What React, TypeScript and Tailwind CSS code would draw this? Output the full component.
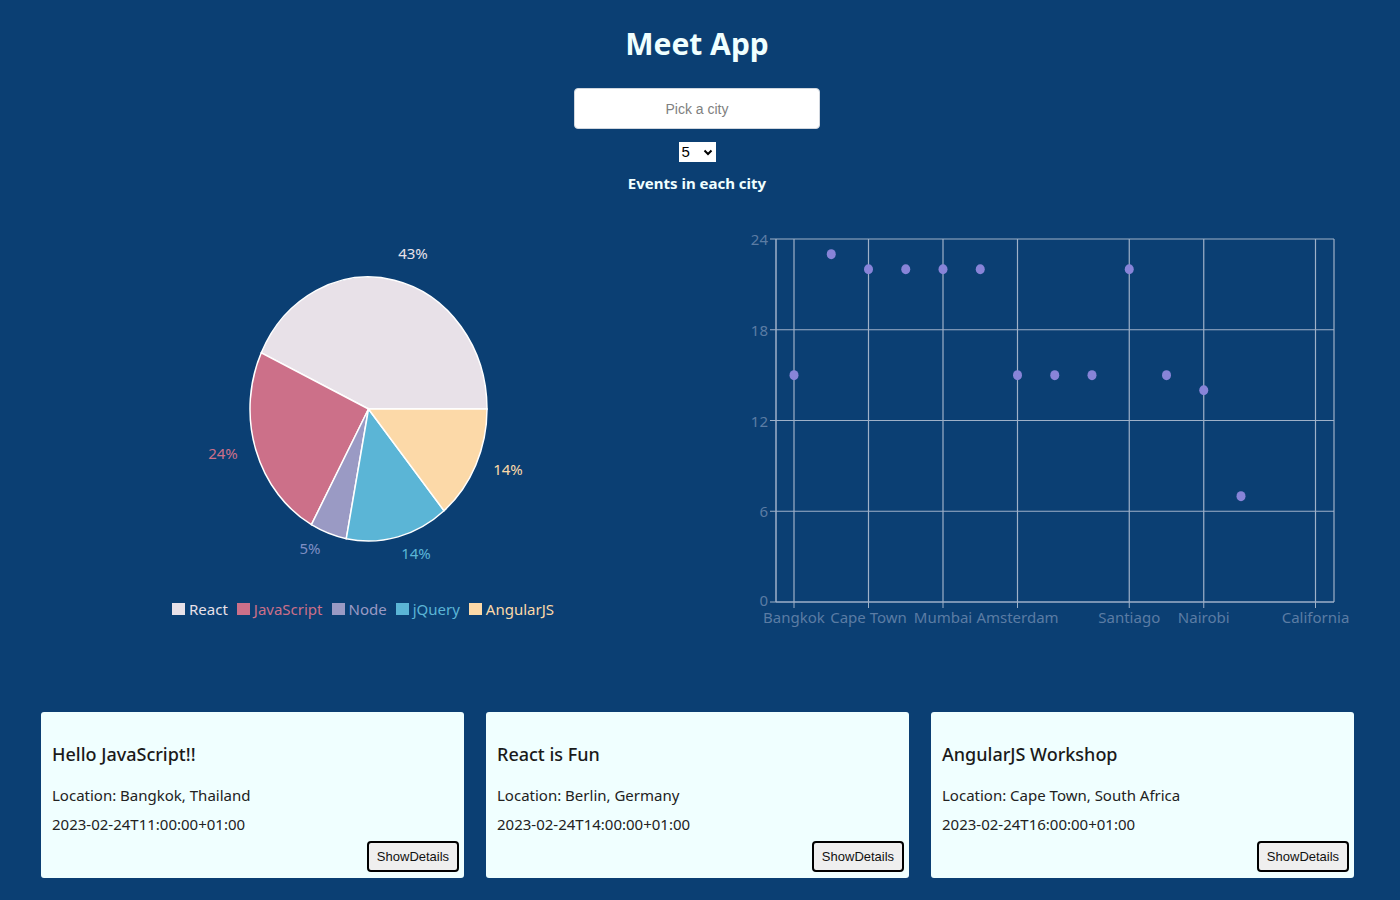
import React from "react";

const pieData = [
  { name: "React", value: 43, color: "#e8e1e8", label: "#e8e1e8", lx: 413, ly: 253 },
  { name: "JavaScript", value: 24, color: "#cc7089", label: "#cc7089", lx: 223, ly: 453 },
  { name: "Node", value: 5, color: "#9a9ac4", label: "#7f8fc4", lx: 310, ly: 548 },
  { name: "jQuery", value: 14, color: "#5bb5d6", label: "#5bb5d6", lx: 416, ly: 553 },
  { name: "AngularJS", value: 14, color: "#fcd9a8", label: "#fcd9a8", lx: 508, ly: 469 },
];

const events = [
  { title: "Hello JavaScript!!", location: "Bangkok, Thailand", date: "2023-02-24T11:00:00+01:00" },
  { title: "React is Fun", location: "Berlin, Germany", date: "2023-02-24T14:00:00+01:00" },
  { title: "AngularJS Workshop", location: "Cape Town, South Africa", date: "2023-02-24T16:00:00+01:00" },
];

// scatter: 15 categories, counts for the first 13
const counts = [15, 23, 22, 22, 22, 22, 15, 15, 15, 22, 15, 14, 7];
const xTicks: [number, string][] = [
  [0, "Bangkok"],
  [2, "Cape Town"],
  [4, "Mumbai"],
  [6, "Amsterdam"],
  [9, "Santiago"],
  [11, "Nairobi"],
  [14, "California"],
];

const font = "'Noto Sans', 'Open Sans', sans-serif";

function PieChart() {
  const cx = 368.5;
  const cy = 409;
  const rx = 118.5;
  const ry = 132;
  let start = 0;
  const slices = pieData.map((d) => {
    const a0 = (start / 100) * Math.PI * 2;
    start += d.value;
    const a1 = (start / 100) * Math.PI * 2;
    const x0 = cx + rx * Math.cos(a0);
    const y0 = cy - ry * Math.sin(a0);
    const x1 = cx + rx * Math.cos(a1);
    const y1 = cy - ry * Math.sin(a1);
    const large = a1 - a0 > Math.PI ? 1 : 0;
    return { ...d, path: `M${cx},${cy} L${x0},${y0} A${rx},${ry} 0 ${large} 0 ${x1},${y1} Z` };
  });

  return (
    <div className="w-[700px] flex flex-col">
      <svg width="700" height="390" viewBox="0 200 700 390">
        {slices.map((s) => (
          <path key={s.name} d={s.path} fill={s.color} stroke="#ffffff" strokeWidth={1.5} />
        ))}
        {slices.map((s, i) => (
          <text
            key={i}
            x={s.lx}
            y={s.ly}
            fill={s.label}
            fontSize={15}
            fontFamily={font}
            textAnchor="middle"
            dominantBaseline="central"
          >
            {s.value}%
          </text>
        ))}
      </svg>
      <div className="flex justify-center gap-[9px] pl-[26px] mt-[8px] text-[15px]" style={{ fontFamily: font }}>
        {pieData.map((d) => (
          <div key={d.name} className="flex items-center gap-[4px]">
            <span className="w-[13px] h-[12px]" style={{ background: d.color }} />
            <span style={{ color: d.color }}>{d.name}</span>
          </div>
        ))}
      </div>
    </div>
  );
}

function ScatterChart() {
  const left = 776;
  const right = 1334;
  const top = 239;
  const bottom = 602;
  const step = 37.25;
  const x0 = 794;
  const yOf = (v: number) => bottom - (v * (bottom - top)) / 24;
  const grid = "#9fb1c8";
  const tickText = "#5b7ca4";

  return (
    <div className="w-[700px]">
      <svg width="700" height="440" viewBox="700 200 700 440">
        {[6, 12, 18, 24].map((v) => (
          <line key={v} x1={left} x2={right} y1={yOf(v)} y2={yOf(v)} stroke={grid} strokeWidth={1.2} />
        ))}
        {xTicks.map(([i]) => (
          <line key={i} x1={x0 + i * step} x2={x0 + i * step} y1={top} y2={bottom} stroke={grid} strokeWidth={1.2} />
        ))}
        <line x1={right} x2={right} y1={top} y2={bottom} stroke={grid} strokeWidth={1.2} />
        {/* axes */}
        <line x1={left} x2={left} y1={top} y2={bottom} stroke={grid} strokeWidth={1.5} />
        <line x1={left} x2={right} y1={bottom} y2={bottom} stroke={grid} strokeWidth={1.5} />
        {[0, 6, 12, 18, 24].map((v) => (
          <g key={v}>
            <line x1={left - 6} x2={left} y1={yOf(v)} y2={yOf(v)} stroke={grid} />
            <text
              x={left - 8}
              y={v === 0 ? yOf(v) - 2 : yOf(v)}
              fill={tickText}
              fontSize={15}
              fontFamily={font}
              textAnchor="end"
              dominantBaseline="central"
            >
              {v}
            </text>
          </g>
        ))}
        {xTicks.map(([i, name]) => (
          <g key={name}>
            <line x1={x0 + i * step} x2={x0 + i * step} y1={bottom} y2={bottom + 6} stroke={grid} />
            <text
              x={x0 + i * step}
              y={617}
              fill={tickText}
              fontSize={15}
              fontFamily={font}
              textAnchor="middle"
              dominantBaseline="central"
            >
              {name}
            </text>
          </g>
        ))}
        {counts.map((c, i) => (
          <ellipse key={i} cx={x0 + i * step} cy={yOf(c)} rx={4.5} ry={5} fill="#8884d8" />
        ))}
      </svg>
    </div>
  );
}

export default function App() {
  return (
    <div className="w-[1400px] h-[900px] bg-[#0b3f73] overflow-hidden" style={{ fontFamily: font }}>
      {/* Header */}
      <div className="flex flex-col items-center pt-[22px] pr-[6px] h-[200px]">
        <h1 className="text-[#f0ffff] text-[30px] font-bold leading-[44px]">Meet App</h1>
        <input
          type="text"
          placeholder="Pick a city"
          className="mt-[22px] w-[246px] h-[41px] rounded-[4px] bg-white border border-[#d0d6de] text-center text-[14px] placeholder:text-[#808080] outline-none"
          style={{ fontFamily: "'Liberation Sans', Arial, sans-serif" }}
        />
        <div
          className="mt-[13px] w-[37px] h-[20px] bg-white flex items-center justify-between px-[3px] text-[15px] text-black"
          style={{ fontFamily: "'Liberation Sans', Arial, sans-serif" }}
        >
          <span>5</span>
          <svg width="10" height="7" viewBox="0 0 10 7">
            <path d="M1.5 1.5 L5 5 L8.5 1.5" fill="none" stroke="#000" strokeWidth={2} />
          </svg>
        </div>
        <h4 className="mt-[10px] text-[#f0ffff] text-[15px] font-bold">Events in each city</h4>
      </div>

      {/* Charts */}
      <div className="flex h-[440px]">
        <PieChart />
        <ScatterChart />
      </div>

      {/* Events */}
      <div className="flex gap-[22px] pl-[41px] mt-[72px]">
        {events.map((e) => (
          <div key={e.title} className="w-[423px] h-[166px] bg-[#f0ffff] rounded-[3px] flex flex-col pt-[29px] pl-[11px]">
            <h2 className="text-[18px] font-medium text-[#1a1a1a] leading-[26px]">{e.title}</h2>
            <p className="mt-[15px] text-[15px] text-[#222] leading-[26px]">Location: {e.location}</p>
            <p className="mt-[3px] text-[15px] text-[#222] leading-[26px]">{e.date}</p>
            <button
              className="self-end mt-auto mb-[6px] mr-[5px] w-[92px] h-[31px] border-2 border-black rounded-[4px] bg-[#efefef] text-[13px] text-[#111]"
              style={{ fontFamily: "'Liberation Sans', Arial, sans-serif" }}
            >
              ShowDetails
            </button>
          </div>
        ))}
      </div>
    </div>
  );
}
